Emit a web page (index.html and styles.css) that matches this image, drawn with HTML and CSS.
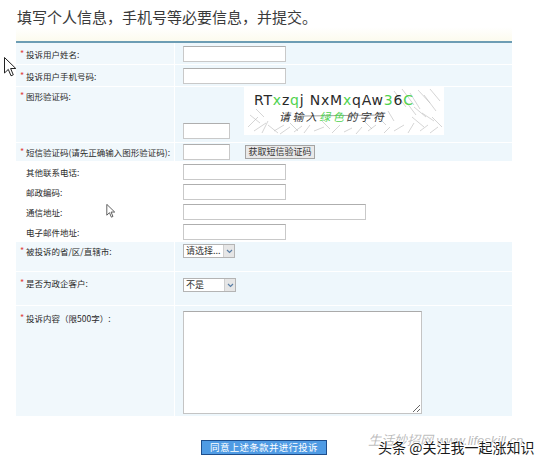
FILE: index.html
```html
<!DOCTYPE html>
<html lang="zh-CN">
<head>
<meta charset="utf-8">
<title>投诉表单</title>
<link rel="stylesheet" href="styles.css">
</head>
<body>
<h1 class="title">填写个人信息，手机号等必要信息，并提交。</h1>
<div class="form">
  <div class="topband"></div>
  <div class="topline"></div>

  <div class="row blue r-std">
    <div class="lab"><span class="req">*</span>投诉用户姓名:</div>
    <div class="fld"><input class="inp w-std" type="text"></div>
  </div>
  <div class="row blue r-std">
    <div class="lab"><span class="req">*</span>投诉用户手机号码:</div>
    <div class="fld"><input class="inp w-std" type="text"></div>
  </div>
  <div class="row blue r-captcha top">
    <div class="lab"><span class="req">*</span>图形验证码:</div>
    <div class="fld col">
      <svg class="captcha" width="200" height="48" viewBox="0 0 200 48">
        <rect width="200" height="48" fill="#fff"/>
        <g stroke="#b8b8b8" stroke-width="0.6" fill="none">
          <path d="M4 40 L14 30 M10 44 L22 36 M18 46 L24 34 M30 44 L40 38 M36 47 L46 40 M50 45 L58 39 M60 46 L66 38 M70 44 L80 40 M88 46 L96 38 M100 45 L108 41 M112 47 L118 40 M124 44 L132 38 M140 46 L146 40 M150 44 L160 38 M164 46 L170 36 M176 44 L184 38 M186 46 L194 40"/>
          <path d="M150 4 L162 20 M158 2 L170 18 M166 6 L176 22 M174 3 L186 16 M180 8 L192 24 M186 2 L196 14 M160 12 L172 28 M170 20 L182 30 M178 26 L190 34 M168 30 L180 40 M188 30 L198 40"/>
          <path d="M6 28 L16 36 M12 22 L20 30 M24 38 L34 46 M46 36 L54 44 M78 34 L86 42 M120 34 L128 42 M134 30 L142 38 M144 24 L150 34"/>
        </g>
        <path d="M60 29 L140 28" stroke="#777" stroke-width="0.7"/>
        <text x="10" y="18" font-family="DejaVu Sans, sans-serif" font-size="14" fill="#2a2a2a" textLength="159" lengthAdjust="spacing">RT<tspan fill="#4fd24f">x</tspan>z<tspan fill="#4fd24f">q</tspan>j NxM<tspan fill="#4fd24f">x</tspan>qAw<tspan fill="#4fd24f">3</tspan>6<tspan fill="#4fd24f">C</tspan></text>
        <text x="35" y="33.5" font-family="Noto Sans CJK SC, sans-serif" font-size="11" font-style="italic" fill="#333" textLength="105" lengthAdjust="spacing">请输入<tspan fill="#4fd24f">绿色</tspan>的字符</text>
      </svg>
      <input class="inp w-sm captcha-inp" type="text">
    </div>
  </div>
  <div class="row blue r-sms">
    <div class="lab"><span class="req">*</span>短信验证码(请先正确输入图形验证码):</div>
    <div class="fld"><input class="inp w-sm" type="text"><button class="btn-sms" type="button">获取短信验证码</button></div>
  </div>

  <div class="row white r-w">
    <div class="lab"><span class="req"></span>其他联系电话:</div>
    <div class="fld"><input class="inp w-std" type="text"></div>
  </div>
  <div class="row white r-w">
    <div class="lab"><span class="req"></span>邮政编码:</div>
    <div class="fld"><input class="inp w-std" type="text"></div>
  </div>
  <div class="row white r-w">
    <div class="lab"><span class="req"></span>通信地址:</div>
    <div class="fld"><input class="inp w-lg" type="text"></div>
  </div>
  <div class="row white r-w r-last">
    <div class="lab"><span class="req"></span>电子邮件地址:</div>
    <div class="fld"><input class="inp w-std" type="text"></div>
  </div>

  <div class="row blue top r-prov">
    <div class="lab"><span class="req">*</span>被投诉的省/区/直辖市:</div>
    <div class="fld"><span class="sel s1"><span class="sel-text">请选择...</span><span class="sel-arrow"><svg width="7" height="5" viewBox="0 0 7 5"><path d="M1 1 L3.5 3.5 L6 1" stroke="#5a7fa6" stroke-width="1.2" fill="none"/></svg></span></span></div>
  </div>
  <div class="row blue top r-gov">
    <div class="lab"><span class="req">*</span>是否为政企客户:</div>
    <div class="fld"><span class="sel s2"><span class="sel-text">不是</span><span class="sel-arrow"><svg width="7" height="5" viewBox="0 0 7 5"><path d="M1 1 L3.5 3.5 L6 1" stroke="#5a7fa6" stroke-width="1.2" fill="none"/></svg></span></span></div>
  </div>
  <div class="row blue top r-content">
    <div class="lab"><span class="req">*</span>投诉内容（限500字）:</div>
    <div class="fld"><textarea class="txt"></textarea></div>
  </div>

  <div class="actions"><button class="submit" type="button">同意上述条款并进行投诉</button></div>
</div>

<div class="wm">
  <span class="wm-bg">生活妙招网 www.lifeskill.cn</span>
  <span class="wm-fg">头条 @关注我一起涨知识</span>
</div>

<svg class="cursor c1" width="13" height="20" viewBox="0 0 13 20"><path d="M0.5 0.5 L0.5 16 L4.3 12.4 L7 18.8 L9.3 17.8 L6.6 11.5 L11.8 11.5 Z" fill="#fff" stroke="#222" stroke-width="1"/></svg>
<svg class="cursor c2" width="10" height="14" viewBox="0 0 13 20"><path d="M0.5 0.5 L0.5 16 L4.3 12.4 L7 18.8 L9.3 17.8 L6.6 11.5 L11.8 11.5 Z" fill="#fff" stroke="#444" stroke-width="1.2"/></svg>
</body>
</html>
```

FILE: styles.css
```css
* { box-sizing: border-box; }

body {
  margin: 0;
  width: 544px;
  height: 467px;
  overflow: hidden;
  position: relative;
  background: #fff;
  color: #333;
  font-family: "Noto Sans CJK SC", "Liberation Sans", sans-serif;
}

.title {
  margin: 0;
  padding: 7px 0 0 17px;
  font-size: 15px;
  line-height: 20px;
  font-weight: normal;
  color: #3a3a3a;
}

.form {
  margin-left: 16px;
  width: 496px;
}

.topband {
  height: 14px;
  background: linear-gradient(#ffffff, #fcfbee);
}

.topline {
  height: 2px;
  background: #6d9db4;
}

.row {
  display: grid;
  grid-template-columns: 158px 1fr;
  column-gap: 1px;
  margin-bottom: 1px;
}

.row.blue .lab,
.row.blue .fld {
  background: #eef7fc;
}

.row.blue .lab {
  background: #f1f8fc;
}

.lab {
  display: flex;
  align-items: center;
  padding-left: 2px;
  font-size: 8.5px;
  line-height: 14px;
  color: #2a2a2a;
  white-space: nowrap;
}

.req {
  flex-shrink: 0;
  display: inline-block;
  width: 8px;
  color: #e0443c;
  font-size: 9px;
  text-align: center;
}

.fld {
  display: flex;
  align-items: center;
  padding-left: 8px;
}

.row.top .lab,
.row.top .fld {
  align-items: flex-start;
}

.inp {
  height: 16px;
  margin: 0;
  padding: 0 2px;
  border: 1px solid #c9c9c9;
  border-top-color: #aeaeae;
  background: #fff;
  font-size: 9px;
}
.w-std { width: 103px; }
.w-sm { width: 47px; }
.w-lg { width: 183px; }

.r-std { height: 21px; }

.r-captcha { height: 55px; }
.r-captcha .lab { padding-top: 2px; }
.fld.col {
  flex-direction: column;
  align-items: flex-start;
}
.captcha {
  display: block;
  flex-shrink: 0;
  align-self: center;
  margin-left: -8px;
}
.fld .captcha-inp { margin-top: -12px; }

.r-sms { height: 18px; }

.r-w { height: 20px; margin-bottom: 0; }

.r-prov { height: 29px; }
.r-prov .lab, .r-prov .fld { padding-top: 2px; }

.r-gov { height: 33px; }
.r-gov .lab { padding-top: 4px; }
.r-gov .fld { padding-top: 6px; }

.r-content { height: 110px; }
.r-content .lab { padding-top: 5px; }
.r-content .fld { padding-top: 5px; }

.btn-sms {
  width: 70px;
  height: 14px;
  margin: 0 0 0 15px;
  padding: 0;
  border: 1px solid #a4a4a4;
  background: #e9e9e9;
  color: #333;
  font-family: inherit;
  font-size: 9px;
  line-height: 12px;
}

.sel {
  display: flex;
  height: 14px;
  border: 1px solid #b4b4b4;
  background: #fff;
}
.s1 { width: 52px; }
.s2 { width: 53px; }
.sel-text {
  flex: 1;
  padding-left: 2px;
  font-size: 9px;
  line-height: 12px;
  color: #333;
  white-space: nowrap;
  overflow: hidden;
}
.sel-arrow {
  width: 11px;
  display: flex;
  align-items: center;
  justify-content: center;
  background: #e6e6e6;
  border-left: 1px solid #cfcfcf;
}

.txt {
  width: 239px;
  height: 103px;
  margin: 0;
  border: 1px solid #c4c4c4;
  border-top-color: #aaa;
  background: #fff;
  display: block;
}

.actions {
  margin-top: 24px;
  display: flex;
  justify-content: center;
}

.submit {
  width: 126px;
  height: 15px;
  padding: 0;
  border: 1px solid #1e4e8c;
  background: #4f9be4;
  color: #fff;
  font-family: inherit;
  font-size: 9.5px;
  line-height: 13px;
  letter-spacing: 0.3px;
}

.wm {
  position: absolute;
  left: 368px;
  top: 430px;
  width: 170px;
  height: 30px;
}
.wm-bg {
  position: absolute;
  left: 0;
  top: 0;
  font-family: "Liberation Sans", "Noto Sans CJK SC", sans-serif;
  font-style: italic;
  font-size: 13px;
  color: rgba(130, 130, 130, 0.55);
  white-space: nowrap;
}
.wm-fg {
  position: absolute;
  left: 10px;
  top: 8px;
  font-size: 14px;
  line-height: 18px;
  color: #1a1a1a;
  white-space: nowrap;
  text-shadow: 1px 0 #fff, -1px 0 #fff, 0 1px #fff, 0 -1px #fff;
}

.cursor {
  position: absolute;
  display: block;
}
.c1 { left: 4px; top: 57px; }
.c2 { left: 106px; top: 204px; }
```
